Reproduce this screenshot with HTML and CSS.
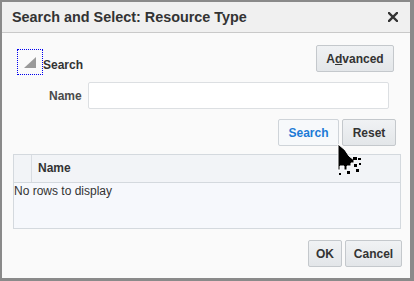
FILE: index.html
```html
<!DOCTYPE html>
<html>
<head>
<meta charset="utf-8">
<link rel="stylesheet" href="styles.css">
</head>
<body>
<div class="dialog">
  <div class="titlebar">
    <span class="title">Search and Select: Resource Type</span>
    <svg class="close" width="10" height="10" viewBox="0 0 10 10"><path d="M1 1 L9 9 M9 1 L1 9" stroke="#333" stroke-width="2.4" stroke-linecap="square"/></svg>
  </div>
  <div class="content">
    <div class="row-top">
      <div class="toggle">
        <span class="disclose"><svg width="12" height="11" viewBox="0 0 12 11"><polygon points="0,11 12,11 12,0" fill="#9a9a9a"/></svg></span>
        <span class="toggle-label">Search</span>
      </div>
      <button class="btn adv">A<u>d</u>vanced</button>
    </div>
    <div class="row-name">
      <label class="lbl">Name</label>
      <input class="field" type="text">
    </div>
    <div class="row-actions">
      <button class="btn primary">Search</button>
      <button class="btn">Reset</button>
    </div>
    <div class="table">
      <div class="thead">
        <div class="th-sel"></div>
        <div class="th-name">Name</div>
      </div>
      <div class="tbody">No rows to display</div>
    </div>
    <div class="row-foot">
      <button class="btn">OK</button>
      <button class="btn">Cancel</button>
    </div>
  </div>
  <svg class="cursor" width="32" height="36" viewBox="0 0 32 36">
    <polygon points="2,2 2,28 4,28 4,24 8,24 8,28 11,28 11,24 15,24 15,21 18,21 18,18 13,14 9,8" fill="#000" stroke="#fff" stroke-width="1"/>
    <rect x="17" y="15" width="4" height="3" fill="#000"/>
    <rect x="22" y="16" width="3" height="2" fill="#000"/>
    <rect x="18" y="22" width="3" height="3" fill="#000"/>
    <rect x="23" y="21" width="2" height="2" fill="#000"/>
    <rect x="11" y="29" width="3" height="3" fill="#000"/>
    <rect x="20" y="27" width="3" height="3" fill="#000"/>
    <rect x="3" y="31" width="2" height="2" fill="#000"/>
  </svg>
</div>
</body>
</html>
```
FILE: styles.css
```css
html, body {
  margin: 0;
  padding: 0;
  background: #8e8e8e;
}
.dialog {
  position: relative;
  width: 414px;
  height: 281px;
  box-sizing: border-box;
  border-style: solid;
  border-color: #8a8a8a;
  border-width: 2px 4px 3px 2px;
  background: #fafafa;
  font-family: "Liberation Sans", Arial, sans-serif;
  color: #333;
  display: flex;
  flex-direction: column;
}
.titlebar {
  height: 30px;
  background: #f0f0f0;
  border-bottom: 1px solid #c9c9c9;
  display: flex;
  align-items: center;
  justify-content: space-between;
  padding: 0 12px 0 10px;
  flex: none;
}
.title {
  font-size: 14.4px;
  font-weight: bold;
  color: #333;
}
.close {
  display: block;
}
.content {
  flex: 1;
  display: flex;
  flex-direction: column;
}
.row-top {
  display: flex;
  justify-content: space-between;
  align-items: flex-start;
  padding: 12px 16px 0 15px;
  height: 27px;
}
.toggle {
  display: flex;
  align-items: center;
  margin-top: 4px;
}
.disclose {
  width: 26px;
  height: 26px;
  border: 1px dotted #0000ee;
  display: flex;
  align-items: flex-end;
  justify-content: center;
  box-sizing: border-box;
  padding-bottom: 6px;
}
.toggle-label {
  font-size: 12px;
  font-weight: bold;
  margin-left: 0;
  margin-top: 5px;
}
.btn {
  font-family: "Liberation Sans", Arial, sans-serif;
  font-size: 12px;
  font-weight: bold;
  color: #333;
  height: 27px;
  background: linear-gradient(#f0f2f4, #e3e6e9);
  border: 1px solid #c4c8cc;
  border-radius: 2px;
  padding: 0 9px;
  margin: 0;
}
.btn u {
  text-decoration: underline;
}
.adv {
  width: 78px;
}
.row-name {
  display: flex;
  align-items: center;
  padding: 10px 21px 0 47px;
}
.lbl {
  font-size: 12px;
  font-weight: bold;
  color: #4a4a4a;
  width: 39px;
}
.field {
  flex: 1;
  height: 27px;
  box-sizing: border-box;
  border: 1px solid #dcdfe2;
  border-radius: 2px;
  background: #fff;
  margin: 0;
}
.row-actions {
  display: flex;
  justify-content: flex-end;
  gap: 3px;
  padding: 10px 14px 0 0;
}
.row-actions .primary {
  width: 61px;
  background: #f7f9fb;
  color: #1d7bd6;
  border-color: #cfd4d9;
}
.row-actions .btn:last-child {
  width: 54px;
}
.table {
  margin: 8px 9px 0 11px;
  border: 1px solid #d4d9de;
  background: #f6f8fc;
  height: 75px;
  box-sizing: border-box;
}
.thead {
  display: flex;
  height: 27px;
  background: #f2f4f7;
  border-bottom: 1px solid #d4d9de;
}
.th-sel {
  width: 17px;
  border-right: 1px solid #d9dde2;
}
.th-name {
  font-size: 12px;
  font-weight: bold;
  color: #333;
  padding-left: 6px;
  line-height: 27px;
}
.tbody {
  font-size: 12px;
  color: #333;
  padding-top: 1px;
  line-height: 14px;
}
.row-foot {
  display: flex;
  justify-content: flex-end;
  gap: 3px;
  padding: 11px 8px 0 0;
}
.row-foot .btn:first-child {
  width: 34px;
  padding: 0;
}
.row-foot .btn:last-child {
  width: 57px;
  padding: 0;
}
.cursor {
  position: absolute;
  left: 334px;
  top: 140px;
}
```
